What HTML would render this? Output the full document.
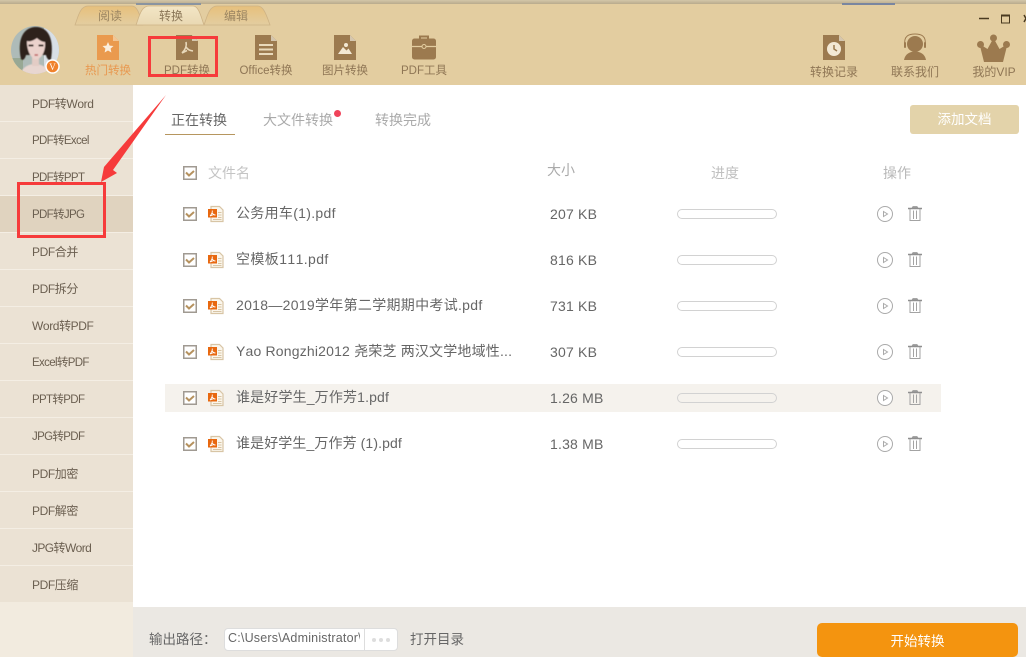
<!DOCTYPE html>
<html><head><meta charset="utf-8"><style>
*{margin:0;padding:0;box-sizing:border-box}
html,body{width:1026px;height:657px;overflow:hidden;background:#fff}
body{position:relative;font-family:"Liberation Sans","Noto Sans CJK SC",sans-serif;color:#555;font-kerning:none}
.a{position:absolute;white-space:nowrap;line-height:1}
.side{left:32px;font-size:12px;color:#6b5f50;letter-spacing:-.4px}
.nr{font-size:11.5px;letter-spacing:-.65px}
.sep{position:absolute;left:0;width:133px;height:1px;background:#f4eee4}
.nav{font-size:11.5px;color:#8f7655;text-align:center;width:80px}
.fn{left:236px;font-size:14px;color:#666;letter-spacing:.15px}
.sz{left:550px;font-size:14px;color:#666;letter-spacing:.2px}
.bar{position:absolute;left:677px;width:100px;height:10px;border:1px solid #d2d2d2;border-radius:5px;background:#fff}
svg{position:absolute;overflow:visible}
</style></head><body>
<div class="a" style="left:0;top:0;width:1026px;height:85px;background:#e3cda0"></div>
<div class="a" style="left:0;top:0;width:1026px;height:4px;background:linear-gradient(#d3c6a8,#b9ab8c)"></div>
<div class="a" style="left:136px;top:3px;width:65px;height:2px;background:#8a94a0"></div>
<div class="a" style="left:842px;top:3px;width:53px;height:2px;background:#7a86a0"></div>

<svg style="left:0;top:0" width="300" height="30">
<defs><linearGradient id="t1" x1="0" y1="0" x2="0" y2="1"><stop offset="0" stop-color="#e7c07c"/><stop offset="1" stop-color="#e3cda0"/></linearGradient>
<linearGradient id="t2" x1="0" y1="0" x2="0" y2="1"><stop offset="0" stop-color="#f3e6c6"/><stop offset="1" stop-color="#e9d8b2"/></linearGradient></defs>
<path d="M75 25C78 17 80 6 88 6H132C138 6 140 17 143 25Z" fill="url(#t1)" stroke="#cdb285" stroke-width=".8"/>
<path d="M204 25C207 17 209 6 217 6H258C264 6 267 17 270 25Z" fill="url(#t1)" stroke="#cdb285" stroke-width=".8"/>
<path d="M136 25C139 17 141 6 149 6H193C199 6 201 17 204 25Z" fill="url(#t2)" stroke="#cdb285" stroke-width=".8"/>
</svg>
<div class="a" style="left:98px;top:10px;font-size:12px;color:#9c8662">阅读</div>
<div class="a" style="left:159px;top:10px;font-size:12px;color:#8a7657">转换</div>
<div class="a" style="left:224px;top:10px;font-size:12px;color:#9c8662">编辑</div>

<svg style="left:11px;top:26px" width="50" height="50" viewBox="0 0 50 50">
<defs><clipPath id="av"><circle cx="24" cy="24" r="24"/></clipPath><filter id="bl"><feGaussianBlur stdDeviation=".6"/></filter></defs>
<g clip-path="url(#av)"><rect width="48" height="48" fill="#aebbb8"/><rect x="33" width="15" height="48" fill="#d8dfe6"/><rect y="32" width="12" height="16" fill="#98a894"/>
<g filter="url(#bl)"><path d="M9 50C10 42 17 38 24 38S38 42 40 50Z" fill="#e8d6d0"/><rect x="21" y="30" width="7" height="10" fill="#e3ccc5"/>
<path d="M10 33C6 14 12 1 25 1S43 14 40 33C38 35 36 33 35 29L15 29C14 33 12 35 10 33Z" fill="#2e221d"/>
<path d="M16 15C20 16 23 14 26 12C28 14 31 16 34 16C35 24 31 33 25 33.500C20 33 15.500 24 16 15Z" fill="#ebd2cc"/>
<path d="M17.500 19.500h5M27.500 19.500h5" stroke="#33251f" stroke-width="2"/><path d="M23.500 29h3.500" stroke="#c05f60" stroke-width="1.500"/></g></g>
<circle cx="41.500" cy="40.500" r="6.500" fill="#f0822c" stroke="#fff" stroke-width="1.500"/>
<text x="41.500" y="44" font-size="9" fill="#fff" text-anchor="middle" font-family="Liberation Serif">V</text></svg>

<!-- nav icons -->
<svg style="left:97px;top:35px" width="22" height="25" viewBox="0 0 22 25"><path d="M0 0H16L22 6V25H0Z" fill="#ea9a4e"/><path d="M16 0L22 6H16Z" fill="#f3c694"/><path d="M11 7l1.600 3.600 3.900.4-2.900 2.600.8 3.900-3.400-2-3.400 2 .8-3.900-2.900-2.600 3.900-.4Z" fill="#fbeedd"/></svg>
<svg style="left:176px;top:35px" width="22" height="25" viewBox="0 0 22 25"><path d="M0 0H16L22 6V25H0Z" fill="#9c7a4f"/><path d="M16 0L22 6H16Z" fill="#d5c6ae"/><path d="M6 18C9 15 11 11 10 7M10 12C12 15 14 15.500 17 16M6 18L11 15.500" fill="none" stroke="#e9d9bb" stroke-width="1.600"/></svg>
<svg style="left:255px;top:35px" width="22" height="25" viewBox="0 0 22 25"><path d="M0 0H16L22 6V25H0Z" fill="#9c7a4f"/><path d="M16 0L22 6H16Z" fill="#d5c6ae"/><path d="M4 10H18M4 14.500H18M4 19H18" stroke="#e9d9bb" stroke-width="2"/></svg>
<svg style="left:334px;top:35px" width="22" height="25" viewBox="0 0 22 25"><path d="M0 0H16L22 6V25H0Z" fill="#9c7a4f"/><path d="M16 0L22 6H16Z" fill="#d5c6ae"/><circle cx="12" cy="10" r="2" fill="#f3e8d4"/><path d="M4 19L9 12L12.500 15.500L14.500 13.500L18 19Z" fill="#f3e8d4"/></svg>
<svg style="left:412px;top:35px" width="24" height="25" viewBox="0 0 24 25"><path d="M8 4V1.500H16V4" fill="none" stroke="#9c7a4f" stroke-width="2"/><rect y="3.500" width="24" height="21" rx="2.500" fill="#9c7a4f"/><path d="M0 11.500H24" stroke="#e3cda0" stroke-width="1.200"/><circle cx="12" cy="11.500" r="2" fill="#9c7a4f" stroke="#e3cda0"/></svg>
<svg style="left:823px;top:35px" width="22" height="25" viewBox="0 0 22 25"><path d="M0 0H16L22 6V25H0Z" fill="#9c7a4f"/><path d="M16 0L22 6H16Z" fill="#d5c6ae"/><circle cx="11" cy="14" r="7" fill="#f3e8d4"/><path d="M11 10V14L14 16" fill="none" stroke="#9c7a4f" stroke-width="1.500"/></svg>
<svg style="left:903px;top:33px" width="24" height="27" viewBox="0 0 24 27"><path d="M2 13C0 2 7 1 12 1S24 2 22 13" fill="none" stroke="#9c7a4f" stroke-width="1"/><rect x="1" y="9" width="2" height="6" rx="1" fill="#9c7a4f"/><rect x="21" y="9" width="2" height="6" rx="1" fill="#9c7a4f"/><circle cx="12" cy="11" r="8" fill="#9c7a4f"/><path d="M1 27C2 21 7 18.500 12 18.500S22 21 23 27Z" fill="#9c7a4f"/></svg>
<svg style="left:977px;top:34px" width="34" height="28" viewBox="0 0 34 28"><circle cx="3.500" cy="10.500" r="3.500" fill="#9c7a4f"/><circle cx="29.500" cy="10.500" r="3.500" fill="#9c7a4f"/><circle cx="16.500" cy="4" r="3.500" fill="#9c7a4f"/><path d="M7 28L2.500 10L10.500 15L16.500 4L22.500 15L30.500 10L26 28Z" fill="#9c7a4f"/></svg>

<div class="a nav" style="left:68px;top:66px;color:#e8984f">热门转换</div>
<div class="a nav" style="left:147px;top:66px">PDF转换</div>
<div class="a nav" style="left:226px;top:66px">Office转换</div>
<div class="a nav" style="left:305px;top:66px">图片转换</div>
<div class="a nav" style="left:384px;top:66px">PDF工具</div>
<div class="a nav" style="left:794px;top:66px;font-size:12px">转换记录</div>
<div class="a nav" style="left:875px;top:66px;font-size:12px">联系我们</div>
<div class="a nav" style="left:954px;top:66px;font-size:12px">我的VIP</div>

<svg style="left:975px;top:10px" width="51" height="14"><path d="M4 8.500H14" stroke="#4a3a20" stroke-width="1.500"/><rect x="26.500" y="5" width="8" height="8" fill="none" stroke="#4a3a20"/><path d="M26 5.500H35" stroke="#4a3a20" stroke-width="2"/><path d="M49 5L53 12M53 5L49 12" stroke="#4a3a20" stroke-width="1.500"/></svg>

<!-- sidebar -->
<div class="a" style="left:0;top:85px;width:133px;height:572px;background:#f2ebdf"></div>
<div class="a" style="left:0;top:85px;width:133px;height:517px;background:#ebe2d4"></div>
<div class="a" style="left:0;top:196px;width:133px;height:37px;background:#e0d3bf"></div>
<div class="sep" style="top:121px"></div><div class="sep" style="top:158px"></div><div class="sep" style="top:195px"></div><div class="sep" style="top:232px"></div><div class="sep" style="top:269px"></div><div class="sep" style="top:306px"></div><div class="sep" style="top:343px"></div><div class="sep" style="top:380px"></div><div class="sep" style="top:417px"></div><div class="sep" style="top:454px"></div><div class="sep" style="top:491px"></div><div class="sep" style="top:528px"></div><div class="sep" style="top:565px"></div>
<div class="a side" style="top:98px">PDF转Word</div>
<div class="a side nr" style="top:136px">PDF转Excel</div>
<div class="a side nr" style="top:173px">PDF转PPT</div>
<div class="a side nr" style="top:210px">PDF转JPG</div>
<div class="a side" style="top:246px">PDF合并</div>
<div class="a side" style="top:283px">PDF拆分</div>
<div class="a side" style="top:320px">Word转PDF</div>
<div class="a side nr" style="top:358px">Excel转PDF</div>
<div class="a side nr" style="top:395px">PPT转PDF</div>
<div class="a side nr" style="top:432px">JPG转PDF</div>
<div class="a side" style="top:468px">PDF加密</div>
<div class="a side" style="top:505px">PDF解密</div>
<div class="a side" style="top:542px;letter-spacing:-.6px">JPG转Word</div>
<div class="a side" style="top:579px">PDF压缩</div>

<!-- tabs -->
<div class="a" style="left:171px;top:113px;font-size:14px;color:#666">正在转换</div>
<div class="a" style="left:165px;top:134px;width:70px;height:1px;background:#b6965f"></div>
<div class="a" style="left:263px;top:113px;font-size:14px;color:#aaa">大文件转换</div>
<div class="a" style="left:334px;top:110px;width:7px;height:7px;border-radius:50%;background:#f0435a"></div>
<div class="a" style="left:375px;top:113px;font-size:14px;color:#aaa">转换完成</div>
<div class="a" style="left:910px;top:105px;width:109px;height:29px;background:#e3d3aa;border-radius:3px;color:#fff;font-size:13.500px;text-align:center;line-height:30px">添加文档</div>

<!-- table head -->
<svg width="0" height="0" style="position:absolute"><defs>
<g id="cb"><rect x=".75" y=".75" width="12.500" height="12.500" fill="#fff" stroke="#a09a92" stroke-width="1.500"/><path d="M3 6.500L6 9.500L11 5" fill="none" stroke="#b6925f" stroke-width="2"/></g>
<g id="pf"><path d="M3 1.500H11.500L15 5V16.500H3Z" fill="#fbf6ec" stroke="#d8c5a5" stroke-width="1.200"/><path d="M10 7.500H13.500M10 10H13.500M10 12.500H13.500M5 14.500H13.500" stroke="#d8c5a5"/><rect y="4" width="9" height="8.500" fill="#e8680f"/><path d="M2 11C3.500 9.500 4.500 8 4.300 5.500M4.300 8C5 9.500 6 10 7.500 10M2 11L6 9.500" fill="none" stroke="#fff" stroke-width=".9"/></g>
<g id="pl"><circle cx="8" cy="8" r="7.500" fill="#fff" stroke="#aaa"/><path d="M6.500 5.500L10.500 8L6.500 10.500Z" fill="none" stroke="#aaa"/></g>
<g id="tr"><path d="M0 2.500H14" stroke="#8f8f8f" stroke-width="1.500"/><path d="M4 2L5 .5H9L10 2" fill="#999" stroke="#999" stroke-width=".8"/><path d="M2 3V14.500H12V3M5.500 4.500V13M8.500 4.500V13" fill="none" stroke="#a3a3a3"/></g>
</defs></svg>
<svg style="left:183px;top:166px" width="14" height="14"><use href="#cb"/></svg>
<div class="a" style="left:208px;top:166px;font-size:14px;color:#c4c4c4">文件名</div>
<div class="a" style="left:547px;top:163px;font-size:14px;color:#aaa">大小</div>
<div class="a" style="left:711px;top:166px;font-size:14px;color:#c0c0c0">进度</div>
<div class="a" style="left:883px;top:166px;font-size:14px;color:#b8b8b8">操作</div>

<!-- hover row -->
<div class="a" style="left:165px;top:384px;width:776px;height:28px;background:#f5f2ed"></div>

<svg style="left:183px;top:207px" width="14" height="14"><use href="#cb"/></svg><svg style="left:208px;top:205px" width="16" height="18"><use href="#pf"/></svg>
<div class="a fn" style="top:206px;letter-spacing:.3px">公务用车(1).pdf</div><div class="a sz" style="top:207px">207 KB</div><div class="bar" style="top:209px"></div>
<svg style="left:877px;top:206px" width="16" height="16"><use href="#pl"/></svg><svg style="left:908px;top:206px" width="14" height="15"><use href="#tr"/></svg>

<svg style="left:183px;top:253px" width="14" height="14"><use href="#cb"/></svg><svg style="left:208px;top:251px" width="16" height="18"><use href="#pf"/></svg>
<div class="a fn" style="top:252px;letter-spacing:.4px">空模板111.pdf</div><div class="a sz" style="top:253px">816 KB</div><div class="bar" style="top:255px"></div>
<svg style="left:877px;top:252px" width="16" height="16"><use href="#pl"/></svg><svg style="left:908px;top:252px" width="14" height="15"><use href="#tr"/></svg>

<svg style="left:183px;top:299px" width="14" height="14"><use href="#cb"/></svg><svg style="left:208px;top:297px" width="16" height="18"><use href="#pf"/></svg>
<div class="a fn" style="top:298px;letter-spacing:.3px">2018—2019学年第二学期期中考试.pdf</div><div class="a sz" style="top:299px">731 KB</div><div class="bar" style="top:301px"></div>
<svg style="left:877px;top:298px" width="16" height="16"><use href="#pl"/></svg><svg style="left:908px;top:298px" width="14" height="15"><use href="#tr"/></svg>

<svg style="left:183px;top:345px" width="14" height="14"><use href="#cb"/></svg><svg style="left:208px;top:343px" width="16" height="18"><use href="#pf"/></svg>
<div class="a fn" style="top:344px;letter-spacing:.18px">Yao Rongzhi2012 尧荣芝 两汉文学地域性...</div><div class="a sz" style="top:345px">307 KB</div><div class="bar" style="top:347px"></div>
<svg style="left:877px;top:344px" width="16" height="16"><use href="#pl"/></svg><svg style="left:908px;top:344px" width="14" height="15"><use href="#tr"/></svg>

<svg style="left:183px;top:391px" width="14" height="14"><use href="#cb"/></svg><svg style="left:208px;top:389px" width="16" height="18"><use href="#pf"/></svg>
<div class="a fn" style="top:390px">谁是好学生_万作芳1.pdf</div><div class="a sz" style="top:391px">1.26 MB</div><div class="bar" style="top:393px;background:#f5f2ed"></div>
<svg style="left:877px;top:390px" width="16" height="16"><use href="#pl"/></svg><svg style="left:908px;top:390px" width="14" height="15"><use href="#tr"/></svg>

<svg style="left:183px;top:437px" width="14" height="14"><use href="#cb"/></svg><svg style="left:208px;top:435px" width="16" height="18"><use href="#pf"/></svg>
<div class="a fn" style="top:436px;letter-spacing:.1px">谁是好学生_万作芳 (1).pdf</div><div class="a sz" style="top:437px">1.38 MB</div><div class="bar" style="top:439px"></div>
<svg style="left:877px;top:436px" width="16" height="16"><use href="#pl"/></svg><svg style="left:908px;top:436px" width="14" height="15"><use href="#tr"/></svg>

<!-- footer -->
<div class="a" style="left:133px;top:607px;width:893px;height:50px;background:#ebe8e3"></div>
<div class="a" style="left:149px;top:633px;font-size:13.500px;color:#666">输出路径：</div>
<div class="a" style="left:224px;top:628px;width:174px;height:23px;background:#fff;border:1px solid #ddd;border-radius:4px"></div>
<div class="a" style="left:364px;top:629px;width:1px;height:21px;background:#ddd"></div>
<div class="a" style="left:228px;top:632px;width:132px;overflow:hidden;font-size:12.500px;color:#666;letter-spacing:.2px">C:\Users\Administrator\</div>
<svg style="left:371px;top:637px" width="20" height="6"><circle cx="3" cy="3" r="2" fill="#ddd"/><circle cx="10" cy="3" r="2" fill="#ddd"/><circle cx="17" cy="3" r="2" fill="#ddd"/></svg>
<div class="a" style="left:410px;top:633px;font-size:13.500px;color:#666">打开目录</div>
<div class="a" style="left:817px;top:623px;width:201px;height:34px;background:#f4940f;border-radius:5px;color:#fff;font-size:13.500px;text-align:center;line-height:37px">开始转换</div>

<!-- annotations -->
<div class="a" style="left:148px;top:36px;width:70px;height:41px;border:3px solid #f63b3b"></div>
<div class="a" style="left:17px;top:182px;width:89px;height:56px;border:3px solid #f63b3b"></div>
<svg style="left:0;top:0" width="200" height="200"><path d="M166 95L110 160L104 167L101 182L117 173L113 170Z" fill="#f63b3b"/></svg>
</body></html>
